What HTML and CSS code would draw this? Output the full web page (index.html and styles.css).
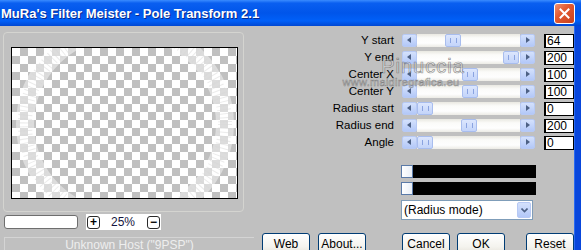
FILE: index.html
```html
<!DOCTYPE html>
<html lang="en">
<head>
    <meta charset="UTF-8">
    <title>MuRa's Filter Meister - Pole Transform 2.1</title>
    <link rel="stylesheet" href="styles.css">
</head>
<body>
    <div class="window">
        <div class="titlebar">
            <span class="title">MuRa's Filter Meister - Pole Transform 2.1</span>
            <button class="close-x">
                <svg width="11" height="11" viewBox="0 0 11 11"><path d="M1.5 1.5 L9.5 9.5 M9.5 1.5 L1.5 9.5" stroke="#fff" stroke-width="2" stroke-linecap="square"/></svg>
            </button>
        </div>

        <div class="client">
            <div class="left-col">
                <div class="preview-group">
                    <div class="preview">
                        <svg class="arcs" width="225" height="150" viewBox="0 0 225 150">
                            <ellipse cx="113" cy="76" rx="100" ry="96" fill="none" stroke="#fff" stroke-opacity="0.45" stroke-width="18"/>
                            <ellipse cx="113" cy="76" rx="100" ry="96" fill="none" stroke="#d8d8d8" stroke-opacity="0.5" stroke-width="14" stroke-dasharray="1 3"/>
                        </svg>
                    </div>
                </div>
                <div class="zoom-row">
                    <div class="host-field"></div>
                    <div class="zoom-box">
                        <span class="zoom-btn">+</span>
                        <span class="zoom-val">25%</span>
                        <span class="zoom-btn">&minus;</span>
                    </div>
                </div>
                <div class="status">Unknown Host ("9PSP")</div>
            </div>

            <div class="right-col">
                <div class="params">
                    <div class="param">
                        <span class="label">Y start</span>
                        <div class="scroll"><span class="arrow left"></span><div class="track"><span class="thumb" style="margin-left:28px"></span></div><span class="arrow right"></span></div>
                        <span class="value">64</span>
                    </div>
                    <div class="param">
                        <span class="label">Y end</span>
                        <div class="scroll"><span class="arrow left"></span><div class="track"><span class="thumb" style="margin-left:86px"></span></div><span class="arrow right"></span></div>
                        <span class="value">200</span>
                    </div>
                    <div class="param">
                        <span class="label">Center X</span>
                        <div class="scroll"><span class="arrow left"></span><div class="track"><span class="thumb" style="margin-left:45px"></span></div><span class="arrow right"></span></div>
                        <span class="value">100</span>
                    </div>
                    <div class="param">
                        <span class="label">Center Y</span>
                        <div class="scroll"><span class="arrow left"></span><div class="track"><span class="thumb" style="margin-left:45px"></span></div><span class="arrow right"></span></div>
                        <span class="value">100</span>
                    </div>
                    <div class="param">
                        <span class="label">Radius start</span>
                        <div class="scroll"><span class="arrow left"></span><div class="track"><span class="thumb" style="margin-left:0px"></span></div><span class="arrow right"></span></div>
                        <span class="value">0</span>
                    </div>
                    <div class="param">
                        <span class="label">Radius end</span>
                        <div class="scroll"><span class="arrow left"></span><div class="track"><span class="thumb" style="margin-left:44px"></span></div><span class="arrow right"></span></div>
                        <span class="value">200</span>
                    </div>
                    <div class="param">
                        <span class="label">Angle</span>
                        <div class="scroll"><span class="arrow left"></span><div class="track"><span class="thumb" style="margin-left:0px"></span></div><span class="arrow right"></span></div>
                        <span class="value">0</span>
                    </div>
                </div>

                <div class="color-bars">
                    <div class="color-bar"><span class="handle"></span></div>
                    <div class="color-bar"><span class="handle"></span></div>
                </div>

                <div class="combo">
                    <span class="combo-text">(Radius mode)</span>
                    <span class="combo-btn">
                        <svg width="7" height="5" viewBox="0 0 7 5"><path d="M0.5 0.5 L3.5 3.5 L6.5 0.5" fill="none" stroke="#4d6185" stroke-width="1.6"/></svg>
                    </span>
                </div>

                <div class="buttons">
                    <button class="btn web">Web</button>
                    <button class="btn about">About...</button>
                    <button class="btn cancel">Cancel</button>
                    <button class="btn ok">OK</button>
                    <button class="btn reset">Reset</button>
                </div>
            </div>
        </div>

        <div class="watermark">
            <span class="wm-name">Pinuccia</span>
            <span class="wm-url">www.maidiregrafica.eu</span>
        </div>
    </div>
</body>
</html>
```

FILE: styles.css
```css
body {
    margin: 0;
    font-family: "Liberation Sans", Arial, sans-serif;
    font-size: 11px;
    background: #c0c0c0;
}
.window {
    position: relative;
    width: 581px;
    height: 250px;
    overflow: hidden;
    background: #c0c0c0;
}
.titlebar {
    height: 26px;
    display: flex;
    align-items: center;
    justify-content: space-between;
    background: linear-gradient(#3a8cff 0%, #0a5ff0 12%, #0055ea 50%, #0060f8 80%, #0047d2 100%);
}
.title {
    padding-left: 1px;
    color: #fff;
    font-weight: bold;
    font-size: 13px;
    text-shadow: 1px 1px 0 #0a2a8a;
}
.close-x {
    width: 21px;
    height: 21px;
    margin-right: 6px;
    margin-top: 1px;
    padding: 0;
    border: 1px solid #fff;
    border-radius: 3px;
    background: linear-gradient(135deg, #f09070 0%, #e25a32 40%, #c8401c 100%);
    display: flex;
    align-items: center;
    justify-content: center;
}
.client {
    display: flex;
    height: 224px;
    border-right: 6px solid #0846dc;
    box-shadow: inset -1px 0 0 #2a6af0;
}
.left-col {
    width: 254px;
    flex: none;
}
.preview-group {
    margin: 6px 0 0 3px;
    width: 241px;
    height: 180px;
    border: 1px solid #d4d4d0;
    border-radius: 4px;
    padding: 14px 0 0 7px;
    box-sizing: border-box;
}
.preview {
    width: 225px;
    height: 150px;
    border: 1px solid #000;
    background-color: #fff;
    background-image:
        linear-gradient(45deg, #c0c0c0 25%, transparent 25%, transparent 75%, #c0c0c0 75%),
        linear-gradient(45deg, #c0c0c0 25%, transparent 25%, transparent 75%, #c0c0c0 75%);
    background-size: 16px 16px;
    background-position: 0 0, 8px 8px;
}
.arcs {
    display: block;
}
.zoom-row {
    display: flex;
    align-items: center;
    margin-top: 2px;
    height: 16px;
}
.host-field {
    width: 72px;
    height: 12px;
    margin-left: 4px;
    background: #fff;
    border: 1px solid #6e6e6e;
    border-radius: 3px;
}
.zoom-box {
    display: flex;
    align-items: center;
    margin-left: 8px;
    width: 75px;
    height: 16px;
    background: #fff;
}
.zoom-btn {
    width: 11px;
    height: 11px;
    margin-left: 1px;
    border: 1px solid #2a2a2a;
    border-radius: 3px;
    font-size: 12px;
    font-weight: bold;
    line-height: 10px;
    text-align: center;
    color: #000;
}
.zoom-val {
    width: 46px;
    text-align: center;
    font-size: 12px;
    color: #141440;
}
.status {
    margin: 7px 0 0 4px;
    height: 20px;
    border-top: 1px solid #d4d4d4;
    border-left: 1px solid #d4d4d4;
    text-align: center;
    font-size: 12px;
    line-height: 15px;
    color: #eeeeee;
}
.right-col {
    flex: 1;
    padding-top: 8px;
}
.params {
    display: flex;
    flex-direction: column;
    gap: 3px;
}
.param {
    display: flex;
    height: 14px;
    align-items: flex-start;
}
.label {
    width: 140px;
    text-align: right;
    font-size: 11.5px;
    line-height: 13px;
    color: #000;
}
.scroll {
    display: flex;
    width: 133px;
    height: 13px;
    margin-left: 8px;
}
.arrow {
    width: 13px;
    height: 11px;
    border: 1px solid #b7c9f4;
    border-radius: 2px;
    background: linear-gradient(#d4e1fc, #b3c8f8);
    position: relative;
}
.arrow::after {
    content: "";
    position: absolute;
    top: 2px;
    border-top: 3.5px solid transparent;
    border-bottom: 3.5px solid transparent;
}
.arrow.left::after {
    left: 4px;
    border-right: 4px solid #4d6185;
}
.arrow.right::after {
    left: 5px;
    border-left: 4px solid #4d6185;
}
.track {
    flex: 1;
    display: flex;
    background: linear-gradient(#e9e8e1, #fbfbf9 30%, #fefefe 70%, #ecebe5);
}
.thumb {
    width: 14px;
    height: 11px;
    border: 1px solid #a8bdee;
    border-radius: 2px;
    background:
        repeating-linear-gradient(90deg, transparent 0 4px, #8aa3e0 4px 5px, transparent 5px 6px) 0 3px / 100% 5px no-repeat,
        linear-gradient(#dce6fd, #c3d4fa);
}
.value {
    width: 26px;
    height: 12px;
    margin-left: 9px;
    border: 1px solid #000;
    border-left-width: 2px;
    background: #fff;
    font-size: 12px;
    line-height: 12px;
    padding-left: 1px;
    color: #000;
}
.color-bars {
    display: flex;
    flex-direction: column;
    gap: 4px;
    margin: 15px 0 0 147px;
}
.color-bar {
    width: 135px;
    height: 13px;
    background: #000;
    display: flex;
}
.handle {
    width: 10px;
    height: 11px;
    border: 1px solid #5a7aa8;
    background: linear-gradient(90deg, #fff, #e8eef6);
}
.combo {
    display: flex;
    align-items: center;
    justify-content: space-between;
    margin: 5px 0 0 147px;
    width: 130px;
    height: 18px;
    background: #fff;
    border: 1px solid #7f9db9;
}
.combo-text {
    padding-left: 2px;
    font-size: 12px;
    color: #000;
}
.combo-btn {
    width: 14px;
    height: 16px;
    margin-right: 1px;
    border: 1px solid #b7c9f4;
    border-radius: 2px;
    box-sizing: border-box;
    background: linear-gradient(#d4e1fc, #b3c8f8);
    display: flex;
    align-items: center;
    justify-content: center;
}
.buttons {
    display: flex;
    margin-top: 13px;
}
.btn {
    width: 48px;
    height: 23px;
    padding: 0 0 2px;
    border: 1px solid #003c74;
    border-radius: 3px;
    background: linear-gradient(#ffffff, #f4f3ee 60%, #e3e0d6);
    font-family: "Liberation Sans", Arial, sans-serif;
    font-size: 12px;
    color: #000;
}
.web {
    margin-left: 8px;
}
.about {
    margin-left: 8px;
}
.cancel {
    margin-left: 36px;
}
.ok {
    margin-left: 7px;
}
.reset {
    margin-left: 21px;
}
.watermark {
    position: absolute;
    left: 335px;
    top: 56px;
    width: 132px;
    display: flex;
    flex-direction: column;
    align-items: center;
    pointer-events: none;
}
.wm-name {
    margin-left: 44px;
    font-size: 20px;
    line-height: 20px;
    letter-spacing: 1px;
    color: rgba(255, 255, 255, 0.35);
    -webkit-text-stroke: 0.7px rgba(80, 80, 80, 0.6);
}
.wm-url {
    font-size: 11px;
    line-height: 12px;
    letter-spacing: 0.3px;
    color: rgba(255, 255, 255, 0.3);
    -webkit-text-stroke: 0.5px rgba(80, 80, 80, 0.6);
}
```
